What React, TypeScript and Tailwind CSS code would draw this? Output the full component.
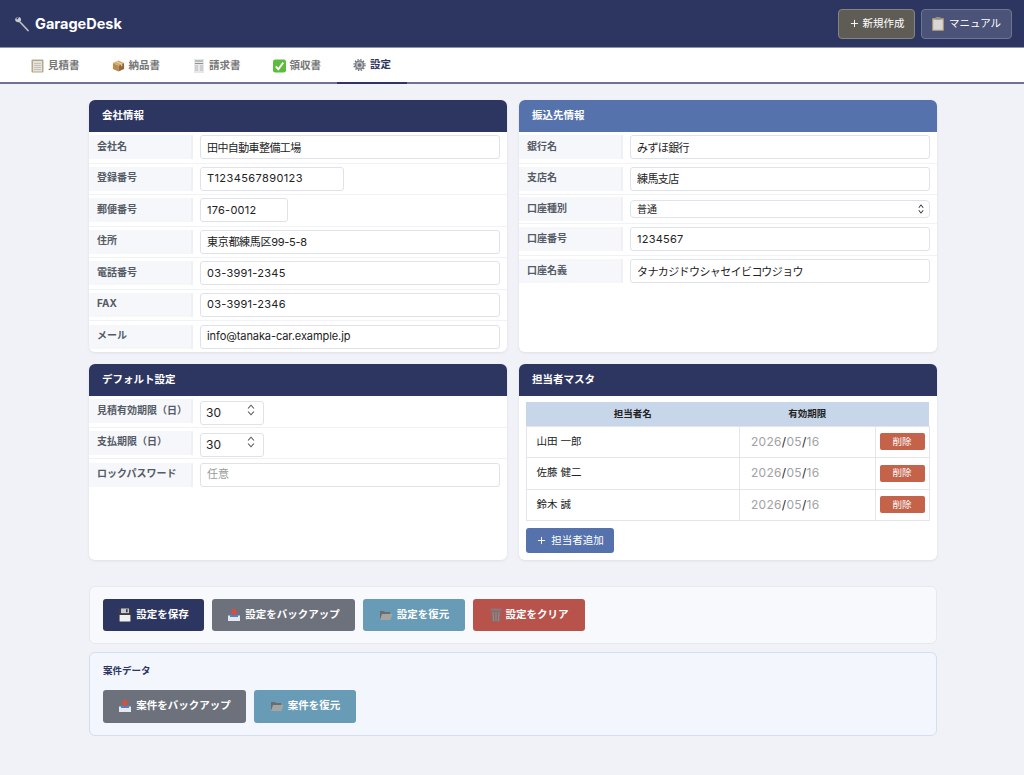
import React from "react";
import { Plus } from "lucide-react";

const sans = "font-['Inter','Noto_Sans_CJK_JP',sans-serif]";

// emoji are not installed, so these are small drawings
const Wrench = () => (
  <svg width="16" height="16" viewBox="0 0 16 16">
    <path d="M14 14.5 L6 6" stroke="#b9bcc4" strokeWidth="1.8" strokeLinecap="round" />
    <path d="M2 3 L4 1.2 C2.8 1 1 2 1.2 4 C1.4 5.6 3.4 6.8 5.4 6 L7 4.4 C7.4 2.6 6.4 1.4 5 1 L3.6 3.4 Z" fill="#c9ccd2" />
  </svg>
);
const Memo = () => (
  <svg width="13" height="14" viewBox="0 0 13 14">
    <rect x="0.5" y="0.5" width="12" height="13" fill="#b9a888" rx="1" />
    <rect x="2" y="2" width="9" height="10.5" fill="#e4e2dc" />
    <path d="M3 4.5h7M3 6.5h7M3 8.5h7M3 10.5h7" stroke="#b5b3ad" strokeWidth="0.7" />
  </svg>
);
const Box = () => (
  <svg width="14" height="14" viewBox="0 0 14 14">
    <path d="M7 1 13 3.8 7 6.6 1 3.8Z" fill="#d2a868" />
    <path d="M1 3.8 7 6.6V13L1 10.2Z" fill="#b98a4c" />
    <path d="M13 3.8 7 6.6V13L13 10.2Z" fill="#93683a" />
    <path d="M3.6 2.6 9.8 5.2V7.6L11 7V4.6L5 2Z" fill="#ead2a4" />
  </svg>
);
const Receipt = () => (
  <svg width="10" height="14" viewBox="0 0 10 14">
    <rect width="10" height="14" fill="#e6e7e8" />
    <path d="M1 2h8M1 4.5h8" stroke="#8f9295" strokeWidth="1" />
    <path d="M1 7h3M6 7h3M1 9h3M6 9h3M1 11h3M6 11h3" stroke="#b4b6b9" strokeWidth="1" />
  </svg>
);
const Check = () => (
  <svg width="14" height="14" viewBox="0 0 14 14">
    <rect width="14" height="14" rx="2.5" fill="#5cbc3c" />
    <path d="M3 7.4 5.8 10.6 11 3.4" stroke="#fff" strokeWidth="2" fill="none" />
  </svg>
);
const Gear = () => (
  <svg width="14" height="14" viewBox="0 0 14 14">
    <circle cx="7" cy="7" r="5.2" fill="#7d8087" />
    <circle cx="7" cy="7" r="5.9" fill="none" stroke="#6b6e75" strokeWidth="1.4" strokeDasharray="1.5 1.6" />
    <circle cx="7" cy="7" r="3.5" fill="#c0c2c7" />
    <circle cx="7" cy="7" r="2" fill="#6e7178" />
  </svg>
);
const Clipboard = () => (
  <svg width="12" height="14" viewBox="0 0 12 14">
    <rect y="1" width="12" height="13" rx="1" fill="#a89474" />
    <rect x="1.2" y="2.6" width="9.6" height="10.2" fill="#d8d8d6" />
    <rect x="3.5" width="5" height="2.4" rx="0.6" fill="#8d8d8d" />
  </svg>
);
const Floppy = () => (
  <svg width="14" height="14" viewBox="0 0 14 14">
    <path d="M0.5 0.5H13.5V13.5H0.5Z" fill="#3a3d45" />
    <rect x="3" y="0.5" width="8" height="4.6" fill="#c9cbd0" />
    <rect x="8" y="1.2" width="1.6" height="3" fill="#3a3d45" />
    <rect x="1.6" y="7" width="10.8" height="6.5" fill="#f0f0f0" />
  </svg>
);
const Inbox = () => (
  <svg width="14" height="14" viewBox="0 0 14 14">
    <path d="M1 7.5H13V13H1Z" fill="#e4e8ef" />
    <path d="M3 6.5H11V9H3Z" fill="#4d86cc" />
    <path d="M5 1H9V4H11L7 8 3 4H5Z" fill="#d0513f" />
  </svg>
);
const Folder = () => (
  <svg width="14" height="14" viewBox="0 0 14 14">
    <path d="M1 3H5L6 4H11V11H1Z" fill="#6a6c6e" />
    <path d="M3 6H13.5L11.5 12H1Z" fill="#a3a5a3" />
  </svg>
);
const Trash = () => (
  <svg width="12" height="14" viewBox="0 0 12 14">
    <ellipse cx="6" cy="2" rx="6" ry="1.6" fill="#8a7a7c" />
    <path d="M0.6 2.4H11.4L10.2 14H1.8Z" fill="#8b6a6c" />
    <path d="M3 4 3.6 13M6 4V13M9 4 8.4 13" stroke="#a88d8d" strokeWidth="0.8" />
  </svg>
);
const Stepper = ({ className, width, height, stroke }: { className: string; width: number; height: number; stroke: number }) => (
  <svg width={width} height={height} viewBox="0 0 8 12" className={className} fill="none" stroke="currentColor" strokeWidth={stroke} preserveAspectRatio="none">
    <path d="M1 4.5 4 1.2 7 4.5M1 7.5 4 10.8 7 7.5" />
  </svg>
);

const tabs = [
  { label: "見積書", icon: <Memo /> },
  { label: "納品書", icon: <Box /> },
  { label: "請求書", icon: <Receipt /> },
  { label: "領収書", icon: <Check /> },
  { label: "設定", icon: <Gear />, active: true },
];

const Row = ({ label, children, last, short }: { label: string; children: React.ReactNode; last?: boolean; short?: boolean }) => (
  <div className={`flex items-center gap-[7px] ${short ? "h-[29px]" : "h-[31.5px]"} ${last ? "" : "border-b border-[#f1f2f5]"}`}>
    <div className="w-[104px] h-[24px] shrink-0 flex items-center pl-[8px] pb-[2px] bg-[#f5f7fa] border-r-2 border-[#eef0f4] text-[10px] font-bold text-[#555b66]">
      {label}
    </div>
    {children}
  </div>
);

const TextField = ({ value, width, placeholder, track }: { value?: string; width?: string; placeholder?: string; track?: string }) => (
  <input
    readOnly
    value={value}
    placeholder={placeholder}
    className={`${width ?? "flex-1 min-w-0 mr-[7px]"} ${track ?? ""} h-[24px] px-[6px] pb-[1px] bg-white border border-[#dfe2e8] rounded-[3px] text-[11px] text-[#222] placeholder:text-[#9a9a9a] outline-none`}
  />
);

const NumberField = ({ value }: { value: string }) => (
  <div className="relative w-[64px] h-[24px]">
    <input
      readOnly
      value={value}
      className="w-full h-full px-[5px] pb-[1px] bg-white border border-[#dfe2e8] rounded-[3px] text-[12px] text-[#222] outline-none"
    />
    <Stepper width={8} height={12} stroke={1.1} className="absolute right-[9px] top-[5px] text-[#555]" />
  </div>
);

const Card = ({ title, color, height, children }: { title: string; color?: string; height: string; children: React.ReactNode }) => (
  <section className={`${height} bg-white rounded-[6px] overflow-hidden shadow-[0_1px_3px_rgba(0,0,0,0.08)]`}>
    <h2 className={`${color ?? "bg-[#2d3561]"} h-[32px] flex items-center px-[13px] text-[10.5px] font-bold text-white`}>{title}</h2>
    {children}
  </section>
);

const ActionButton = ({ icon, label, color, width }: { icon: React.ReactNode; label: string; color: string; width: string }) => (
  <button className={`${color} ${width} h-[32.5px] rounded-[3px] flex items-center justify-center gap-[4px] text-[10.5px] font-bold text-white`}>
    {icon}
    {label}
  </button>
);

const staff = ["山田 一郎", "佐藤 健二", "鈴木 誠"];

const cjk = "tracking-[-0.6px]";
const digits = "tracking-[0.25px]";

const company = [
  { label: "会社名", value: "田中自動車整備工場", track: cjk },
  { label: "登録番号", value: "T1234567890123", width: "w-[144px]", track: "tracking-[0.4px]" },
  { label: "郵便番号", value: "176-0012", width: "w-[88px]", track: digits },
  { label: "住所", value: "東京都練馬区99-5-8", track: "tracking-[-0.3px]" },
  { label: "電話番号", value: "03-3991-2345", track: digits },
  { label: "FAX", value: "03-3991-2346", track: digits },
  { label: "メール", value: "info@tanaka-car.example.jp", track: "tracking-[-0.08px]" },
];

export default function App() {
  return (
    <div className={`min-h-[775px] bg-[#f0f2f7] ${sans}`}>
      <header className="h-[48px] bg-[#2d3561] border-b border-[#8d93ab] flex items-center justify-between pl-[14px] pr-[12px]">
        <div className="flex items-center gap-[5px] text-white text-[14.5px] font-bold">
          <Wrench />
          GarageDesk
        </div>
        <div className="flex items-center gap-[6px]">
          <button className="w-[77px] h-[30px] bg-[#5f5c56] border border-[#85847d] rounded-[4px] flex items-center justify-center gap-[3px] text-[10.5px] text-white">
            <Plus size={11} strokeWidth={2} />
            新規作成
          </button>
          <button className="w-[91px] h-[30px] bg-[#4b5379] border border-[#6d7594] rounded-[4px] flex items-center justify-center gap-[5px] text-[10.5px] text-white">
            <Clipboard />
            マニュアル
          </button>
        </div>
      </header>

      <nav className="h-[36px] bg-white border-b-2 border-[#6b7390] flex pl-[15px]">
        {tabs.map((tab) => (
          <div
            key={tab.label}
            className={`h-[36px] px-[16px] flex items-center gap-[4px] text-[10.5px] font-bold ${
              tab.active ? "text-[#2d3561] border-b-2 border-[#2d3561]" : "text-[#777]"
            }`}
          >
            <span className="w-[13px] flex justify-center">{tab.icon}</span>
            {tab.label}
          </div>
        ))}
      </nav>

      <main className="w-[848px] ml-[89px] pt-[16px]">
        <div className="grid grid-cols-2 gap-[12px]">
          <Card title="会社情報" height="h-[252px]">
            <div className="flex flex-col">
              {company.map((row, i) => (
                <Row key={row.label} label={row.label} last={i === company.length - 1}>
                  <TextField value={row.value} width={row.width} track={row.track} />
                </Row>
              ))}
            </div>
          </Card>

          <Card title="振込先情報" color="bg-[#5672ad]" height="h-[252px]">
            <Row label="銀行名"><TextField value="みずほ銀行" track={cjk} /></Row>
            <Row label="支店名"><TextField value="練馬支店" track={cjk} /></Row>
            <Row label="口座種別" short>
              <div className="relative flex-1 mr-[7px]">
                <select className="appearance-none block w-full h-[18px] px-[6px] bg-white border border-[#dfe2e8] rounded-[4px] text-[10px] text-[#222] outline-none">
                  <option>普通</option>
                </select>
                <Stepper width={6} height={10} stroke={1.3} className="absolute right-[6px] top-[4px] text-[#333]" />
              </div>
            </Row>
            <Row label="口座番号"><TextField value="1234567" track={digits} /></Row>
            <Row label="口座名義" last><TextField value="タナカジドウシャセイビコウジョウ" track={cjk} /></Row>
          </Card>

          <Card title="デフォルト設定" height="h-[196px]">
            <Row label="見積有効期限（日）"><NumberField value="30" /></Row>
            <Row label="支払期限（日）"><NumberField value="30" /></Row>
            <Row label="ロックパスワード" last><TextField placeholder="任意" /></Row>
          </Card>

          <Card title="担当者マスタ" height="h-[196px]">
            <div className="px-[7px] pt-[6px]">
              <table className="w-[404px] -ml-[0.5px] table-fixed border-collapse text-[10.5px] text-[#222]">
                <thead>
                  <tr className="h-[24px] bg-[#c8d6ea] text-[9.5px] font-bold">
                    <th className="w-[213.5px]">担当者名</th>
                    <th className="w-[135.5px]">有効期限</th>
                    <th />
                  </tr>
                </thead>
                <tbody>
                  {staff.map((name) => (
                    <tr key={name} className="h-[31.5px]">
                      <td className="border border-[#e3e5ea] pl-[10px]">{name}</td>
                      <td className="border border-[#e3e5ea] pl-[11px] text-[12px] tracking-[0.3px] text-[#a2a2a2]">
                        2026<span className="text-[#222]">/</span>05<span className="text-[#222]">/</span>16
                      </td>
                      <td className="border border-[#e3e5ea] text-center">
                        <button className="w-[45px] h-[17px] bg-[#c4634a] rounded-[2px] text-[9.5px] text-white">削除</button>
                      </td>
                    </tr>
                  ))}
                </tbody>
              </table>
              <button className="mt-[7px] w-[88px] h-[25px] bg-[#5672ad] rounded-[3px] flex items-center justify-center gap-[4px] text-[10.5px] text-white">
                <Plus size={11} strokeWidth={2} />
                担当者追加
              </button>
            </div>
          </Card>
        </div>

        <div className="mt-[26px] h-[58px] bg-[#f8f9fc] border border-[#e5e8ef] rounded-[6px] flex items-center gap-[8px] pl-[13px]">
          <ActionButton icon={<Floppy />} label="設定を保存" color="bg-[#2d3561]" width="w-[101px]" />
          <ActionButton icon={<Inbox />} label="設定をバックアップ" color="bg-[#6c717c]" width="w-[143px]" />
          <ActionButton icon={<Folder />} label="設定を復元" color="bg-[#689bb5]" width="w-[102px]" />
          <ActionButton icon={<Trash />} label="設定をクリア" color="bg-[#b8534b]" width="w-[112px]" />
        </div>

        <div className="mt-[8px] h-[84px] bg-[#f3f7fd] border border-[#d4deee] rounded-[6px] pl-[13px] pt-[12px]">
          <p className="h-[13px] flex items-center text-[9.5px] font-bold text-[#2d3561]">案件データ</p>
          <div className="mt-[12px] flex gap-[8px]">
            <ActionButton icon={<Inbox />} label="案件をバックアップ" color="bg-[#6c717c]" width="w-[143px]" />
            <ActionButton icon={<Folder />} label="案件を復元" color="bg-[#689bb5]" width="w-[102px]" />
          </div>
        </div>
      </main>
    </div>
  );
}
